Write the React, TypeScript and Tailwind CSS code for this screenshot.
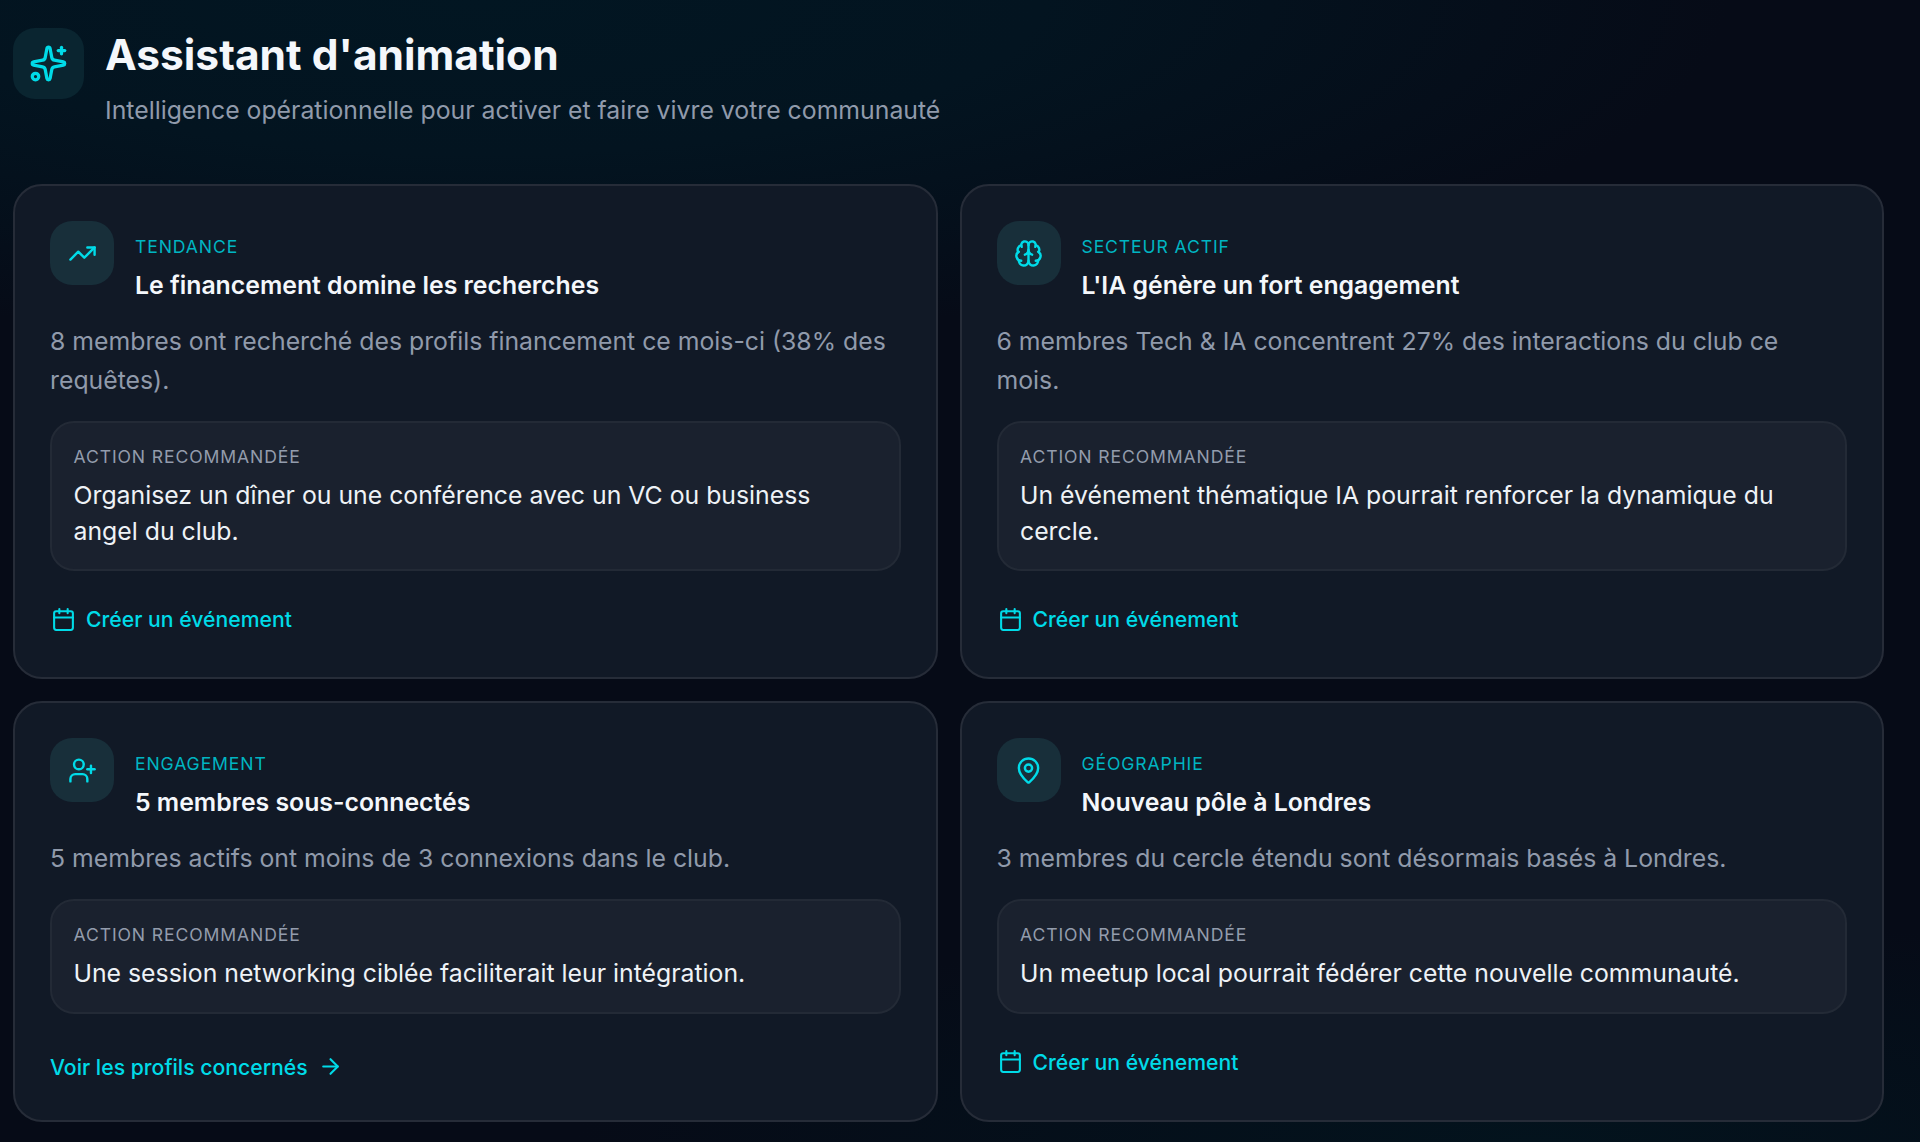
import { Sparkles, TrendingUp, Brain, UserPlus, MapPin, Calendar, ArrowRight, LucideIcon } from "lucide-react";

function Card({ icon: Icon, cat, title, desc, action, link, arrow }: { icon: LucideIcon; cat: string; title: string; desc: string; action: string; link: string; arrow?: boolean }) {
  return (
    <div className={arrow ? "rounded-[29px] border-2 border-[#262c38] bg-[#111926] px-[35px] pt-[35px] pb-[38px] flex flex-col" : "rounded-[29px] border-2 border-[#262c38] bg-[#111926] px-[35px] pt-[35px] pb-[43px] flex flex-col"}>
      <div className="flex gap-[21px]">
        <div className="w-[64px] h-[64px] shrink-0 rounded-[22px] bg-[#182f3a] flex items-center justify-center">
          <Icon className="w-[29px] h-[29px] text-[#00dbe8]" strokeWidth={2} />
        </div>
        <div className="pt-[15px]">
          <div className="text-[17.6px] leading-[22px] tracking-[0.88px] text-[#00b5c2] font-normal uppercase">{cat}</div>
          <div className="mt-[12px] text-[24.8px] leading-[30px] font-semibold text-[#f4f7fb]">{title}</div>
        </div>
      </div>
      <p className="mt-[22px] text-[24.8px] leading-[39px] text-[#909aab]">{desc}</p>
      <div className="mt-[21px] rounded-[24px] border-2 border-[#232a36] bg-[#1a212e] px-[21.5px] pt-[22px] pb-[20px]">
        <div className="text-[17.6px] leading-[24px] tracking-[0.88px] text-[#939cac] uppercase">ACTION RECOMMANDÉE</div>
        <div className="mt-[9px] text-[24.8px] leading-[35.5px] text-[#eef2f6]">{action}</div>
      </div>
      <div className={arrow ? "mt-[38px] flex items-center gap-[10px] text-[#00dbe8]" : "mt-[33px] flex items-center gap-[10px] text-[#00dbe8]"}>
        {!arrow && <Calendar className="w-[25px] h-[25px] ml-px" strokeWidth={2} />}
        <span className="text-[21.2px] leading-[30px] font-medium">{link}</span>
        {arrow && <ArrowRight className="w-[25px] h-[25px]" strokeWidth={2} />}
      </div>
    </div>
  );
}

export default function App() {
  return (
    <div className="min-h-[1142px] pl-[13px] pr-[36px] pt-[28px] font-['Inter',sans-serif] bg-[#060b17] bg-[radial-gradient(ellipse_65%_30%_at_25%_0%,#021622_0%,#031420_45%,transparent_100%),radial-gradient(ellipse_50%_20%_at_80%_100%,#03131d_0%,transparent_100%)]">
      <div className="flex gap-[21px]">
        <div className="w-[71px] h-[71px] rounded-[22px] bg-[#0a2530] flex items-center justify-center">
          <Sparkles className="w-[39px] h-[39px] text-[#00dbe8]" strokeWidth={2} />
        </div>
        <div>
          <h1 className="text-[42.5px] leading-[54px] font-bold text-[#f4f7fb]">Assistant d'animation</h1>
          <p className="mt-[12px] text-[24.8px] leading-[32px] text-[#909aab]">Intelligence opérationnelle pour activer et faire vivre votre communauté</p>
        </div>
      </div>
      <div className="mt-[58px] grid grid-cols-2 gap-[22px]">
        <Card icon={TrendingUp} cat="Tendance" title="Le financement domine les recherches" desc="8 membres ont recherché des profils financement ce mois-ci (38% des requêtes)." action="Organisez un dîner ou une conférence avec un VC ou business angel du club." link="Créer un événement" />
        <Card icon={Brain} cat="Secteur actif" title="L'IA génère un fort engagement" desc="6 membres Tech & IA concentrent 27% des interactions du club ce mois." action="Un événement thématique IA pourrait renforcer la dynamique du cercle." link="Créer un événement" />
        <Card icon={UserPlus} cat="Engagement" title="5 membres sous-connectés" desc="5 membres actifs ont moins de 3 connexions dans le club." action="Une session networking ciblée faciliterait leur intégration." link="Voir les profils concernés" arrow />
        <Card icon={MapPin} cat="Géographie" title="Nouveau pôle à Londres" desc="3 membres du cercle étendu sont désormais basés à Londres." action="Un meetup local pourrait fédérer cette nouvelle communauté." link="Créer un événement" />
      </div>
    </div>
  );
}
